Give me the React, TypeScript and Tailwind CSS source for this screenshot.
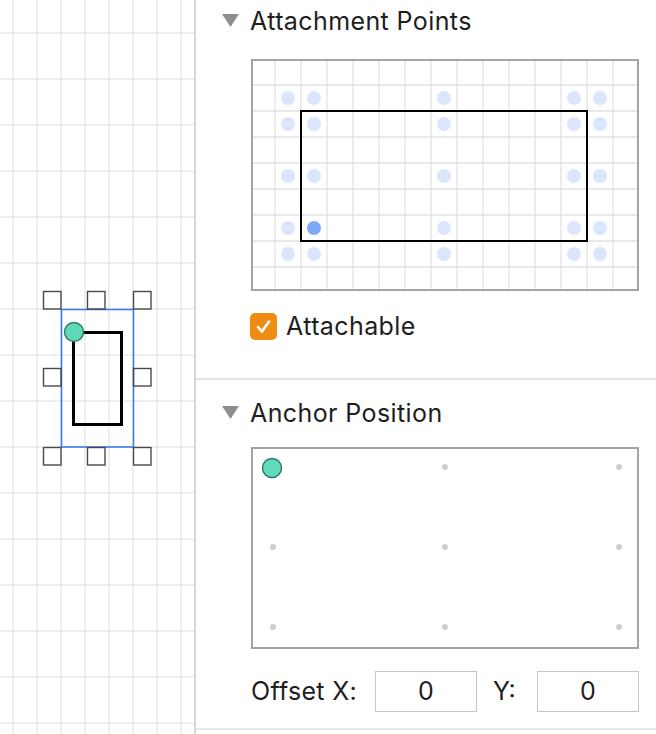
import React from 'react';

const font = { fontFamily: 'Inter, "Liberation Sans", sans-serif' };

function Triangle() {
  return (
    <svg width="17" height="14" viewBox="0 0 17 14" className="shrink-0">
      <polygon points="0,0 17,0 8.5,13" fill="#8e8e8e" />
    </svg>
  );
}

function SectionHeader({ title }: { title: string }) {
  return (
    <div className="flex items-center h-[42px] pl-[26px] gap-[11px]">
      <Triangle />
      <span className="text-[25px] tracking-[0.4px] text-[#1e1e1e] leading-none">{title}</span>
    </div>
  );
}

function CanvasArea() {
  const vLines = [13, 37, 61, 85, 109, 133, 157, 181];
  const hLines = Array.from({ length: 16 }, (_, i) => 33 + i * 46);
  const handles = [
    [43, 291], [87, 291], [133, 291],
    [43, 368], [133, 368],
    [43, 447], [87, 447], [133, 447],
  ];
  return (
    <div className="w-[194px] h-full shrink-0 bg-white border-r-2 border-[#d6d6d6] box-content">
      <svg width="194" height="734" viewBox="0 0 194 734">
        {vLines.map((x) => (
          <line key={'v' + x} x1={x} y1={0} x2={x} y2={734} stroke="#e8e8e8" strokeWidth="1.5" />
        ))}
        {hLines.map((y) => (
          <line key={'h' + y} x1={0} y1={y} x2={194} y2={y} stroke="#e8e8e8" strokeWidth="1.5" />
        ))}
        <rect x="61.5" y="309.5" width="72" height="137.5" fill="none" stroke="#3a7ce8" strokeWidth="1.6" />
        <rect x="73.5" y="332.5" width="48" height="92" fill="none" stroke="#000" strokeWidth="3" />
        {handles.map(([x, y], i) => (
          <rect key={i} x={x + 0.5} y={y + 0.5} width="17.5" height="17.5" fill="none" stroke="#4a4a4a" strokeWidth="1.4" />
        ))}
        <circle cx="74" cy="332" r="9.5" fill="#5fd8b8" stroke="#2f7a65" strokeWidth="1.4" />
      </svg>
    </div>
  );
}

function AttachmentBox() {
  const vx = Array.from({ length: 14 }, (_, i) => 22 + i * 26);
  const hy = Array.from({ length: 8 }, (_, i) => 24 + i * 26);
  const dx = [35, 61, 191, 321, 347];
  const dy = [37, 63, 115, 167, 193];
  return (
    <div className="w-[388px] h-[232px] border-2 border-[#a4a4a4] bg-white">
      <svg width="384" height="228" viewBox="0 0 384 228" className="block">
        {vx.map((x) => (
          <line key={'v' + x} x1={x} y1={0} x2={x} y2={228} stroke="#e2e2e2" strokeWidth="1.3" />
        ))}
        {hy.map((y) => (
          <line key={'h' + y} x1={0} y1={y} x2={384} y2={y} stroke="#e2e2e2" strokeWidth="1.3" />
        ))}
        <rect x="48" y="50" width="286" height="130" fill="none" stroke="#000" strokeWidth="2" />
        {dy.map((y) =>
          dx.map((x) => (
            <circle
              key={x + '-' + y}
              cx={x}
              cy={y}
              r="7"
              fill={x === 61 && y === 167 ? '#7ca9f8' : '#dbe6fd'}
            />
          ))
        )}
      </svg>
    </div>
  );
}

function AnchorBox() {
  const dx = [20, 192, 366];
  const dy = [18, 98, 178];
  return (
    <div className="w-[388px] h-[202px] border-2 border-[#a4a4a4] bg-white">
      <svg width="384" height="198" viewBox="0 0 384 198" className="block">
        {dy.map((y) =>
          dx.map((x) =>
            x === 20 && y === 18 ? null : <circle key={x + '-' + y} cx={x} cy={y} r="3" fill="#cecece" />
          )
        )}
        <circle cx="19" cy="19" r="9.5" fill="#5fdbbb" stroke="#2f7a66" strokeWidth="1.5" />
      </svg>
    </div>
  );
}

export default function App() {
  return (
    <div className="w-[656px] h-[734px] flex bg-white overflow-hidden" style={font}>
      <CanvasArea />
      <div className="flex-1 flex flex-col">
        {/* Attachment points */}
        <div className="border-b-2 border-[#e3e3e3] pb-[38px]">
          <SectionHeader title="Attachment Points" />
          <div className="ml-[55px] mt-[17px]">
            <AttachmentBox />
          </div>
          <label className="ml-[54px] mt-[21px] flex items-center gap-[9px] h-[28px]">
            <span className="w-[27px] h-[27px] rounded-[5px] bg-[#ee8c13] flex items-center justify-center">
              <svg width="17" height="17" viewBox="0 0 17 17">
                <path d="M3 9 L7 13.5 L14 3.5" fill="none" stroke="#fff" strokeWidth="2.6" strokeLinecap="round" strokeLinejoin="round" />
              </svg>
            </span>
            <span className="text-[25px] tracking-[0.4px] text-[#1e1e1e] leading-none">Attachable</span>
          </label>
        </div>

        {/* Anchor position */}
        <div className="pt-[12px] border-b-2 border-[#e8e8e8] pb-[16px]">
          <SectionHeader title="Anchor Position" />
          <div className="ml-[55px] mt-[13px]">
            <AnchorBox />
          </div>
          <div className="ml-[55px] mt-[22px] flex items-center h-[41px]">
            <span className="text-[25px] tracking-[0.3px] text-[#1e1e1e] leading-none w-[124px]">Offset X:</span>
            <div className="w-[102px] h-[41px] border border-[#c6c6c6] flex items-center justify-center text-[25px] text-[#1e1e1e]">
              0
            </div>
            <span className="text-[25px] text-[#1e1e1e] leading-none ml-[16px] w-[44px]">Y:</span>
            <div className="w-[102px] h-[41px] border border-[#c6c6c6] flex items-center justify-center text-[25px] text-[#1e1e1e]">
              0
            </div>
          </div>
        </div>
      </div>
    </div>
  );
}
